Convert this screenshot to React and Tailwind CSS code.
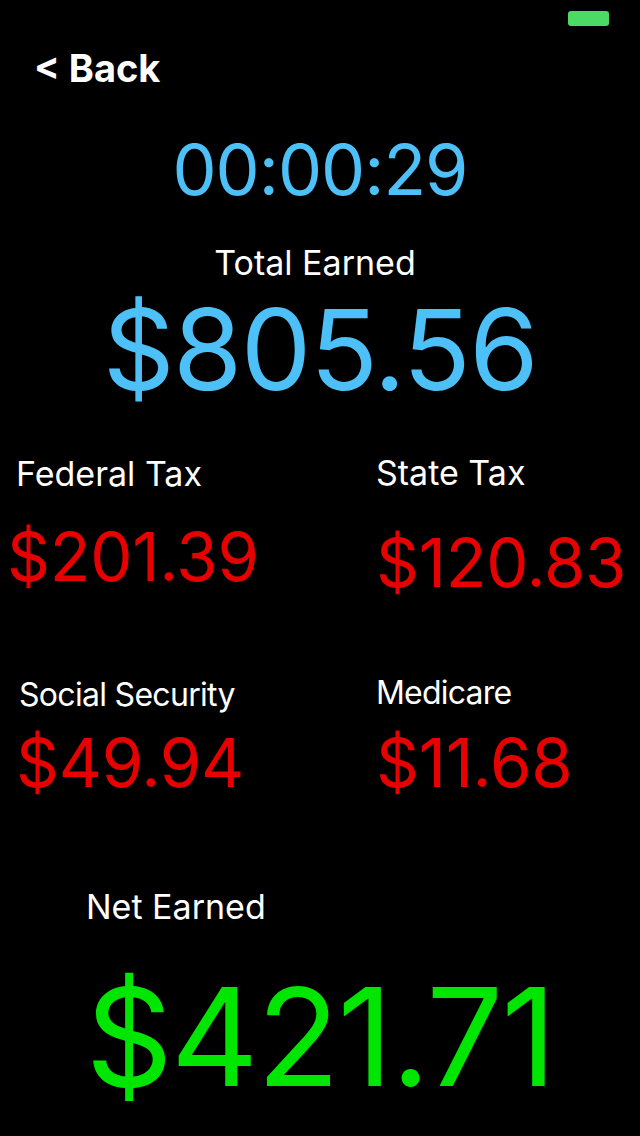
const font = { fontFamily: "Inter, 'Noto Sans', sans-serif" }

function Deduction({ label, amount, labelSize, gap, padLeft, amountPadLeft }) {
  return (
    <div className="flex flex-col">
      <div className={`${labelSize} leading-none text-white ${padLeft}`}>{label}</div>
      <div className={`text-[67px] leading-none tracking-[-0.3px] text-[#e60000] ${gap} ${amountPadLeft}`}>{amount}</div>
    </div>
  )
}

export default function App() {
  return (
    <div className="min-h-[1136px] w-[640px] bg-black overflow-hidden" style={font}>
      {/* status bar battery */}
      <div className="flex justify-end pt-[11px] pr-[31px]">
        <div className="h-[15px] w-[41px] rounded-[3px] bg-[#4cd964]" />
      </div>

      <div className="mt-[23px] pl-[34px] text-[38px] font-bold leading-none text-white">&lt; Back</div>

      <div className="mt-[48px] text-center text-[70px] leading-none tracking-[-1px] text-[#4cc0f7]">00:00:29</div>

      <div className="mt-[41px] pr-[10px] text-center text-[34px] leading-none text-white">Total Earned</div>
      <div className="mt-[13px] text-center text-[112px] leading-none tracking-[-1.5px] text-[#4cc0f7]">$805.56</div>

      <div className="mt-[51px] grid grid-cols-2 gap-y-[81px]">
        <div className="pt-[1px]">
          <Deduction
            label="Federal Tax"
            amount="$201.39"
            labelSize="text-[34px]"
            gap="mt-[32px]"
            padLeft="pl-[16px]"
            amountPadLeft="pl-[7px]"
          />
        </div>
        <div className="pl-[56px]">
          <Deduction
            label="State Tax"
            amount="$120.83"
            labelSize="text-[34px]"
            gap="mt-[39px]"
            padLeft=""
            amountPadLeft=""
          />
        </div>
        <div className="pt-[2px]">
          <Deduction
            label="Social Security"
            amount="$49.94"
            labelSize="text-[32px] tracking-[-0.7px]"
            gap="mt-[18px]"
            padLeft="pl-[19px]"
            amountPadLeft="pl-[16px]"
          />
        </div>
        <div className="pl-[56px]">
          <Deduction
            label="Medicare"
            amount="$11.68"
            labelSize="text-[32px] tracking-[-0.8px]"
            gap="mt-[20px]"
            padLeft=""
            amountPadLeft=""
          />
        </div>
      </div>

      <div className="mt-[94px] pl-[86px] text-[34px] leading-none text-white">Net Earned</div>
      <div className="mt-[45px] text-center text-[136px] leading-none tracking-[-2px] text-[#00e600]">$421.71</div>
    </div>
  )
}
